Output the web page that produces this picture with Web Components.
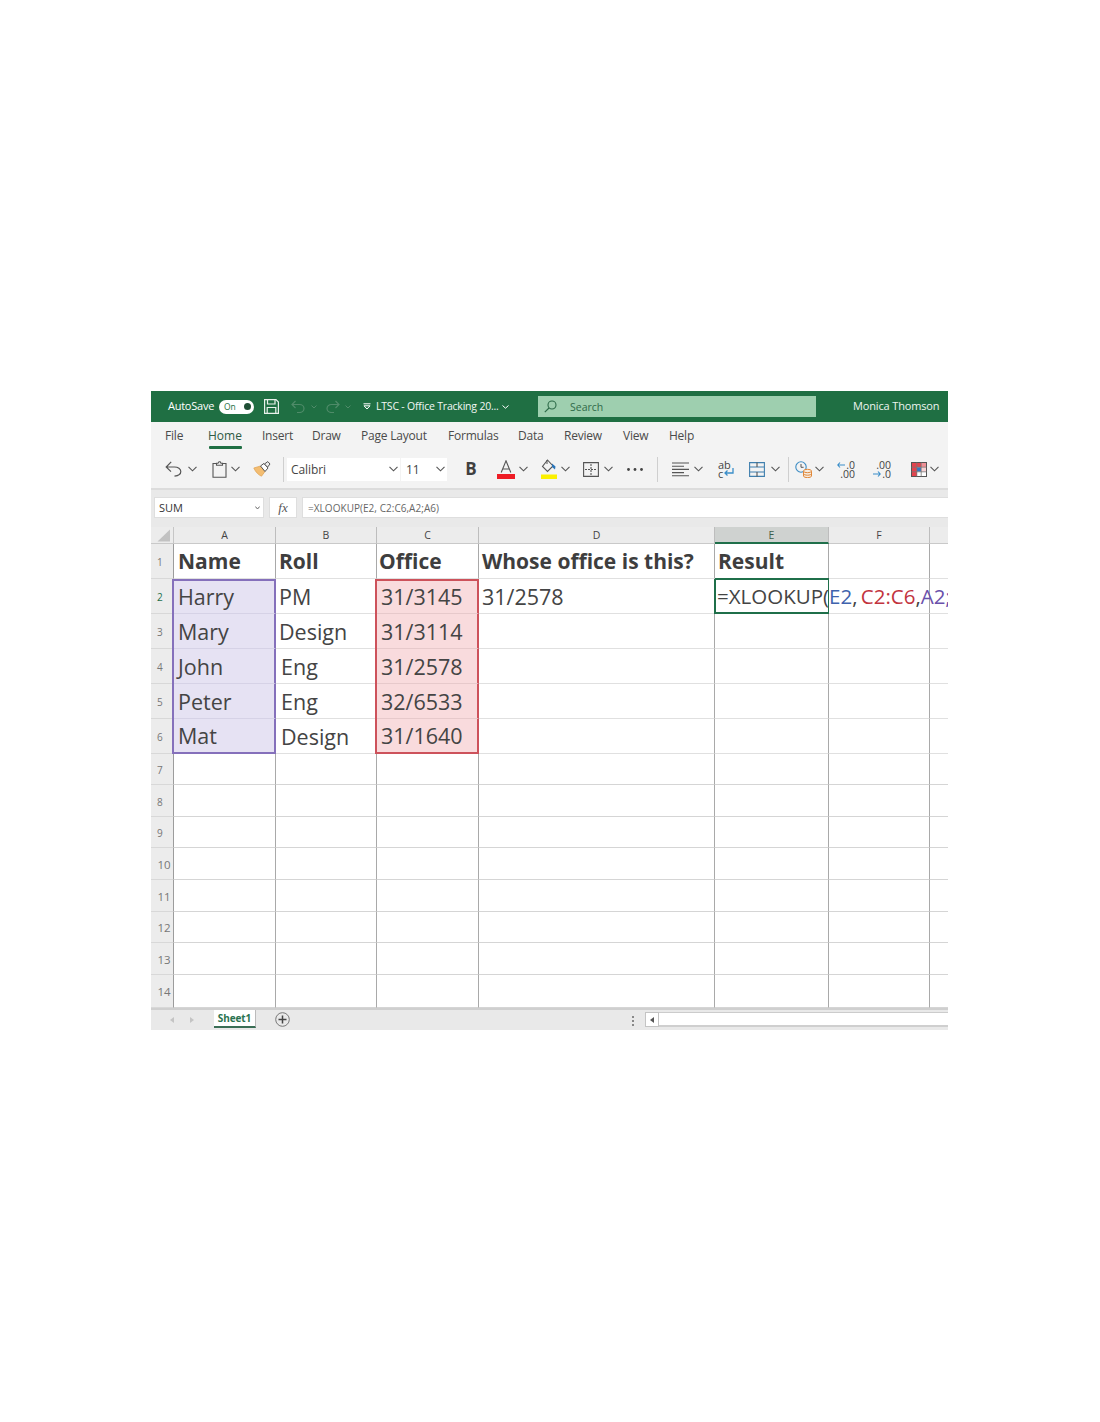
<!DOCTYPE html>
<html lang="en"><head><meta charset="utf-8"><title>Excel XLOOKUP</title>
<style>
html,body{margin:0;background:#fff;font-family:"Open Sans","Noto Sans",sans-serif;}
body{height:1422px;overflow:hidden;display:flow-root}
</style></head><body>
<x-app>
  <x-titlebar></x-titlebar>
  <x-menubar></x-menubar>
  <x-toolbar></x-toolbar>
  <x-formulabar></x-formulabar>
  <x-sheet></x-sheet>
  <x-sheetbar></x-sheetbar>
</x-app>
<script>
const chev=(c='#555')=>`<svg width="9" height="6" viewBox="0 0 9 6" fill="none" stroke="${c}" stroke-width="1.1"><path d="M.5 .8 4.5 4.8 8.5 .8"/></svg>`;
function def(name,css,html,init){
  customElements.define(name,class extends HTMLElement{
    constructor(){super();const s=this.attachShadow({mode:'open'});s.innerHTML=`<style>${css}</style>${typeof html==='function'?html(this):html}`;}
    connectedCallback(){if(init&&!this._i){this._i=1;init(this)}}
  });
}
def('x-app',`:host{display:block;width:797px;height:639px;margin:391px 0 0 151px;overflow:hidden;color:#444;font-family:"Open Sans","Noto Sans",sans-serif}`,`<slot></slot>`);

def('x-titlebar',`
:host{display:flex;align-items:center;height:31px;background:#1f6f43;color:#fff;font-size:11px;position:relative}
span{white-space:nowrap;display:block;padding-bottom:2px}
svg{display:block;flex:none}
.auto{margin-left:17px;width:51px;letter-spacing:-.25px}
.toggle{width:35px;height:14px;border-radius:7px;background:#fff;color:#1f6f43;font-size:8.5px;line-height:13px;position:relative;text-indent:5px;box-sizing:border-box}
.toggle i{position:absolute;right:3px;top:3.5px;width:7px;height:7px;border-radius:50%;background:#1f4f35}
.search{width:278px;height:21px;background:#9ecfaf;color:#2f6a49;display:flex;align-items:center;flex:none}
.search span{margin-left:13px;font-size:10.5px;padding-bottom:0}
.search svg{margin-left:6px}
.doc{font-size:10.5px;letter-spacing:-.2px;margin-left:5px;width:124px;color:#f2f7f4}
.name{margin-left:37px;font-size:11px;color:#eef5f0;letter-spacing:-.15px}
`,`
<span class="auto">AutoSave</span>
<div class="toggle">On<i></i></div>
<svg style="margin-left:10px" width="15" height="15" viewBox="0 0 15 15" fill="none" stroke="#e9f1ec" stroke-width="1.2"><path d="M.6 .6H12L14.4 3V14.4H.6Z"/><path d="M3.5 .8V5H11V.8M3.2 14V8.5H11.8V14"/></svg>
<svg style="margin-left:12px" width="14" height="13" viewBox="0 0 14 13" fill="none" stroke="#4f8b69" stroke-width="1.2"><path d="M4.5 1 1 4.5 4.5 8M1 4.5H8.5C11 4.5 13 6.3 13 8.5S11 12.5 8.5 12.5H6"/></svg>
<svg style="margin-left:6px" width="6" height="4" viewBox="0 0 6 4" fill="none" stroke="#4f8b69"><path d="M.5 .5 3 3 5.5 .5"/></svg>
<svg style="margin-left:9px" width="14" height="13" viewBox="0 0 14 13" fill="none" stroke="#4f8b69" stroke-width="1.2"><path d="M9.5 1 13 4.5 9.5 8M13 4.5H5.5C3 4.5 1 6.3 1 8.5S3 12.5 5.5 12.5H8"/></svg>
<svg style="margin-left:5px" width="6" height="4" viewBox="0 0 6 4" fill="none" stroke="#4f8b69"><path d="M.5 .5 3 3 5.5 .5"/></svg>
<svg style="margin-left:12px" width="8" height="7" viewBox="0 0 8 7" fill="none" stroke="#fff"><path d="M.5 .8H7.5M1 2.8H7L4 6Z"/></svg>
<span class="doc">LTSC - Office Tracking 20...</span>
<svg style="margin-left:2px" width="7" height="4" viewBox="0 0 7 4" fill="none" stroke="#fff"><path d="M.5 .5 3.5 3.2 6.5 .5"/></svg>
<div class="search" style="margin-left:29px"><svg width="13" height="13" viewBox="0 0 13 13" fill="none" stroke="#2c6a48" stroke-width="1.1"><circle cx="8" cy="5" r="4"/><path d="M5 8 .8 12.2"/></svg><span>Search</span></div>
<span class="name">Monica Thomson</span>
`);

def('x-menubar',`
:host{display:flex;align-items:center;height:30px;background:#f3f3f3;font-size:12px;color:#4a4a4a;padding:0 0 3px 14px;box-sizing:border-box;letter-spacing:-.2px}
span{display:block;white-space:nowrap;position:relative;flex:none}
.on{color:#2e5a44;letter-spacing:0;margin-right:20px}
.on::after{content:"";position:absolute;left:1px;right:0;bottom:-5px;height:3px;background:#1f6f43;border-radius:1px}
`,()=>[['File',43],['Home',0],['Insert',50],['Draw',49],['Page Layout',87],['Formulas',70],['Data',46],['Review',59],['View',46],['Help',40]]
  .map(([t,w])=>t==='Home'?`<span class="on">${t}</span>`:`<span style="width:${w}px">${t}</span>`).join(''));

const I={
undo:`<svg width="17" height="16" viewBox="0 0 17 16" fill="none" stroke="#555" stroke-width="1.2"><path d="M6.2 .8 1.2 6 6 10.6M1.4 6H9.5C13 6 15.8 8 15.8 10.5 15.8 13 13 14.8 9.5 15.2"/></svg>`,
clip:`<svg width="15" height="17" viewBox="0 0 15 17" fill="none" stroke="#555" stroke-width="1.1"><path d="M4.5 2.5H1V16.2H14V2.5H10.5"/><path d="M4.5 4.2V2.2H6L7 .8 8.2 .8 9 2.2H10.5V4.2Z"/></svg>`,
brush:`<svg width="18" height="16" viewBox="0 0 18 16"><path d="M.8 7 7.5 5 12 10.5 8.5 15.2C5.5 14 2.5 11 .8 7Z" fill="#f3bd72" stroke="#e0a050" stroke-width=".7"/><path d="M7.5 5 11 2.4 15 7 12 10.5Z" fill="#fff" stroke="#555" stroke-width="1"/><path d="M11.5 3 14.8 .6 17 3 14.5 6.2Z" fill="#eee" stroke="#555" stroke-width="1"/></svg>`,
fontA:`<svg width="18" height="19" viewBox="0 0 18 19" fill="none"><path d="M4.2 12.5 9 .8 13.8 12.5M5.6 9H12.4" stroke="#555" stroke-width="1.1"/><rect y="14" width="18" height="5" fill="#ee1c25"/></svg>`,
fill:`<svg width="16" height="20" viewBox="0 0 16 20" fill="none"><path d="M6.5 1 12 7 6.5 12.5 1.5 7.5Z" stroke="#555" stroke-width="1.1"/><path d="M6 1V5" stroke="#555"/><path d="M11 4.5 14.5 7.5 14 10.5 11 8Z" fill="#2a74b8"/><rect y="15.5" width="16" height="4.5" fill="#fbf000"/></svg>`,
borders:`<svg width="16" height="15" viewBox="0 0 16 15" fill="none" stroke="#555" stroke-width="1.1"><path d="M.6 .6H15.4V14.4H.6Z"/><path d="M8 2V13M2 7.5H14" stroke-dasharray="2 1"/></svg>`,
dots:`<svg width="16" height="3" viewBox="0 0 16 3" fill="#444"><circle cx="1.5" cy="1.5" r="1.4"/><circle cx="8" cy="1.5" r="1.4"/><circle cx="14.5" cy="1.5" r="1.4"/></svg>`,
align:`<svg width="17" height="15" viewBox="0 0 17 15" fill="none" stroke="#555" stroke-width="1.1"><path d="M0 1H17M0 4.2H12M0 7.4H17M0 10.6H12M0 13.8H17"/></svg>`,
merge:`<svg width="16" height="15" viewBox="0 0 16 15" fill="none" stroke-width="1.1"><path d="M.6 .6H15.4V14.4H.6ZM.6 5H15.4M.6 10H15.4" stroke="#3f7fae"/><path d="M8 .6V5M8 10V14.4" stroke="#555"/></svg>`,
cond:`<svg width="17" height="17" viewBox="0 0 17 17" fill="none"><circle cx="6" cy="6" r="5.2" stroke="#3c8cc4" stroke-width="1.1"/><path d="M6 3V6.3H8.6" stroke="#555"/><path d="M8.5 10V15C8.5 16 10.5 16.6 12.5 16.6S16.5 16 16.5 15V10" fill="#f7ece0" stroke="#e0883a"/><ellipse cx="12.5" cy="10" rx="4" ry="1.7" fill="#f7ece0" stroke="#e0883a"/><path d="M8.5 12.6C8.5 13.6 10.5 14.2 12.5 14.2S16.5 13.6 16.5 12.6" stroke="#e0883a"/></svg>`,
table:`<svg width="16" height="15" viewBox="0 0 16 15"><rect x=".5" y=".5" width="15" height="14" fill="#fff" stroke="#555"/><rect x="1" y="1" width="5" height="13" fill="#e4434d"/><rect x="6" y="1" width="4" height="4.3" fill="#e4434d"/><rect x="6" y="5.3" width="4" height="4.3" fill="#3479c4"/><rect x="10" y="1" width="5" height="4.3" fill="#ee9096"/><rect x="10" y="5.3" width="5" height="4.3" fill="#f7d0d2"/><path d="M5.8 .5V14.5M10.2 .5V14.5M.5 5.2H15.5M.5 9.8H15.5" stroke="#777" stroke-width=".8"/></svg>`,
left:`<svg width="8" height="6" viewBox="0 0 8 6" fill="none" stroke="#3a8ec9" stroke-width="1.1"><path d="M3 .5.8 3 3 5.5M1 3H8"/></svg>`,
right:`<svg width="8" height="6" viewBox="0 0 8 6" fill="none" stroke="#3a8ec9" stroke-width="1.1"><path d="M5 .5 7.2 3 5 5.5M7 3H0"/></svg>`
};
def('x-toolbar',`
:host{display:flex;align-items:center;height:36px;background:#f3f3f3;padding:0 0 2px 14px;box-sizing:border-box;position:relative}
svg{display:block;flex:none}
.g{flex:none}
.sep{width:1px;height:25px;background:#cfcfcf;flex:none}
.box{height:23px;background:#fff;font-size:12px;color:#444;display:flex;align-items:center;box-sizing:border-box;flex:none;letter-spacing:-.1px}
.b{font:bold 17px "Open Sans",sans-serif;color:#404040;width:12px;text-align:center;flex:none;line-height:20px}
.wrap{width:17px;flex:none;height:18px;position:relative;font-size:11px;line-height:9px;color:#444}
.wrap div{height:9px}
.wrap svg{position:absolute;left:5px;top:8px}
.dec{flex:none;font-size:10.5px;line-height:8px;color:#444;width:18px;display:flex;flex-direction:column;gap:1px}
.dec div{height:8px;white-space:nowrap;display:flex;justify-content:flex-end;align-items:center;gap:1px}
`,`
${I.undo}<span class="g" style="width:6px"></span>${chev()}
<span class="g" style="width:15px"></span>${I.clip}<span class="g" style="width:4px"></span>${chev()}
<span class="g" style="width:13px"></span>${I.brush}
<span class="sep" style="margin-left:12px"></span>
<div class="box" style="margin-left:3px;width:113px;padding-left:4px;justify-content:space-between;padding-right:2px"><span>Calibri</span>${chev()}</div>
<div class="box" style="margin-left:1px;width:46px;padding-left:5px;justify-content:space-between;padding-right:2px"><span>11</span>${chev()}</div>
<span class="b" style="margin-left:18px">B</span>
<span class="g" style="width:20px"></span>${I.fontA}<span class="g" style="width:4px"></span>${chev()}
<span class="g" style="width:13px"></span>${I.fill}<span class="g" style="width:4px"></span>${chev()}
<span class="g" style="width:13px"></span>${I.borders}<span class="g" style="width:5px"></span>${chev()}
<span class="g" style="width:14px"></span>${I.dots}
<span class="sep" style="margin-left:14px"></span>
<span class="g" style="width:14px"></span>${I.align}<span class="g" style="width:5px"></span>${chev()}
<span class="g" style="width:15px"></span>
<div class="wrap"><div>ab</div><div>c</div><svg width="11" height="9" viewBox="0 0 11 9" fill="none" stroke="#3a8ec9" stroke-width="1.3"><path d="M10 0V5H2M4.5 2.5 2 5 4.5 7.5"/></svg></div>
<span class="g" style="width:14px"></span>${I.merge}<span class="g" style="width:6px"></span>${chev()}
<span class="sep" style="margin-left:8px"></span>
<span class="g" style="width:6px"></span>${I.cond}<span class="g" style="width:3px"></span>${chev()}
<span class="g" style="width:13px"></span>
<div class="dec"><div>${I.left}<span>.0</span></div><div>.00</div></div>
<span class="g" style="width:18px"></span>
<div class="dec"><div>.00</div><div>${I.right}<span>.0</span></div></div>
<span class="g" style="width:20px"></span>${I.table}<span class="g" style="width:3px"></span>${chev()}
`);

def('x-formulabar',`
:host{display:block;background:#e9e9e9;height:39px;box-sizing:border-box;border-top:2px solid #dcdcdc;padding-top:7px}
.row{display:flex;height:21px;align-items:stretch}
.box{background:#fff;box-sizing:border-box;display:flex;align-items:center;flex:none;border:1px solid #dedede}
.name{margin-left:3px;width:110px;font-size:11px;padding:0 3px 0 4px;justify-content:space-between;color:#333}
.fx{margin-left:5px;width:28px;justify-content:center;font:italic 13px "Liberation Serif",serif;color:#555}
.f{margin-left:5px;flex:1;font-size:10px;padding-left:5px;color:#666;letter-spacing:.04px;border-right:0}
`,`<div class="row"><div class="box name"><span>SUM</span><svg width="5" height="4" viewBox="0 0 5 4" fill="none" stroke="#666"><path d="M.3 .5 2.5 3 4.7 .5"/></svg></div><div class="box fx">fx</div><div class="box f">=XLOOKUP(E2, C2:C6,A2;A6)</div></div>`);

def('x-cell',`
:host{display:flex;align-items:center;box-sizing:border-box;background:#fff;border-right:1px solid #a9a9a9;border-bottom:1px solid #e0e0e0;font-size:21.5px;color:#444;white-space:nowrap;position:relative;min-width:0;padding-left:var(--pad,3px)}
:host([bold]){font-weight:700;font-size:21px;color:#3e3e3e}
:host([plain]){border-bottom-color:#d5d5d5}
:host([nob]){border-right:0}
:host([range=purple]){background:#e6e2f3;border-right:2px solid #8570bb;box-shadow:-2px 0 0 #8570bb;border-bottom-color:#d6d2e6}
:host([range=red]){background:#f9dbdd;border-right:2px solid #cd525b;box-shadow:-2px 0 0 #cd525b;border-bottom-color:#e7c9cb}
:host([range=purple][first]){box-shadow:-2px 0 0 #8570bb,inset 0 2px 0 #8570bb}
:host([range=red][first]){box-shadow:-2px 0 0 #cd525b,inset 0 2px 0 #cd525b}
:host([range=purple][last]){border-bottom:2px solid #8570bb}
:host([range=red][last]){border-bottom:2px solid #cd525b}
:host([active]){z-index:2;background:transparent;font-size:20.5px;word-spacing:-2px;box-shadow:inset 1px 1px 0 #1f6f4a,-1px 0 0 #1f6f4a,0 -1px 0 #1f6f4a;border-right:1px solid #1f6f4a;border-bottom:2px solid #1f6f4a}
`,`<slot></slot>`);

def('x-head',`
:host{display:flex;align-items:center;justify-content:center;box-sizing:border-box;background:#ececec;font-size:10.5px;color:#555}
:host([col]){border-right:1px solid #bdbdbd;border-bottom:1px solid #c9c9c9;color:#444}
:host([nob]){border-right:0}
:host([sel]){background:#cfd2d0;border-bottom:2px solid #1f6f4a;color:#3c5e4c}
:host([row]){border-right:1px solid #9c9c9c;border-bottom:1px solid #d8d8d8;color:#777;justify-content:flex-start;padding:2px 0 0 6px;font-size:10px}
:host([wide]){font-size:11.5px;padding:1px 0 0 6.5px}
:host([active]){color:#1f6f4a;border-right:2px solid #47525a}
`,`<slot></slot>`);

def('x-sheet',`
:host{display:grid;grid-template-columns:23px 102px 101px 102px 236px 114px 101px 18px;grid-template-rows:17px 35px 35px 35px 35px 35px 35px 31px 32px 31px 32px 32px 31px 32px 33px;height:481px;background:#fff;overflow:hidden}
.corner{background:#ececec;border-right:1px solid #c6c6c6;box-sizing:border-box;border-bottom:1px solid #c9c9c9;display:flex;justify-content:center;align-items:center}
`,`<div class="corner"><svg width="14" height="13" viewBox="0 0 14 13" style="margin-left:4px"><path d="M13 .5V12.5H.5Z" fill="#c2c2c2"/></svg></div><slot></slot>`,el=>{
  const cols=['A','B','C','D','E','F',''];
  const data={1:[['Name',4],['Roll',3],['Office',2],['Whose office is this?',3],['Result',3]],
   2:[['Harry',4],['PM',3],['31/3145',4],['31/2578',3]],
   3:[['Mary',4],['Design',3],['31/3114',4]],
   4:[['John',4],['Eng',5],['31/2578',4]],
   5:[['Peter',4],['Eng',5],['32/6533',4]],
   6:[['Mat',4],['Design',5],['31/1640',4]]};
  let h='';
  cols.forEach((c,i)=>h+=`<x-head col ${i===4?'sel':''} ${i===6?'nob':''}>${c}</x-head>`);
  for(let r=1;r<=14;r++){
    h+=`<x-head row ${r===2?'active':''} ${r>=10?'wide':''}>${r}</x-head>`;
    for(let c=0;c<7;c++){
      const d=(data[r]||[])[c];
      let a='';
      if(r===1)a+=' bold';
      if(r>=7)a+=' plain';
      if(c===6)a+=' nob';
      if(r>=2&&r<=6&&(c===0||c===2)){a+=` range="${c===0?'purple':'red'}"`;if(r===2)a+=' first';if(r===6)a+=' last';}
      let t=d?d[0]:'';
      let pad=d?d[1]:3;
      if(r===2&&c===4){a+=' active';pad=2;t=`<span>=XLOOKUP(<span style="color:#3f63ad">E2</span>, <span style="color:#c2333e">C2:C6</span>,<span style="color:#6a50ab">A2;</span></span>`;}
      h+=`<x-cell${a} style="--pad:${pad}px">${t}</x-cell>`;
    }
  }
  el.innerHTML=h;
});

def('x-sheetbar',`
:host{display:flex;align-items:flex-start;height:22px;box-sizing:border-box;background:#e9e9e9;border-top:2px solid #cfcfcf;position:relative}
svg{display:block;flex:none}
.tab{margin-left:20px;width:42px;height:18px;background:#fff;color:#2a7350;font-size:10px;font-weight:700;display:flex;align-items:center;justify-content:center;border-bottom:2px solid #3a6e55;border-right:1px solid #bbb;box-sizing:border-box;flex:none;letter-spacing:-.1px}
.btn{width:14px;height:15px;background:#fff;border:1px solid #c4c4c4;box-sizing:border-box;display:flex;align-items:center;justify-content:center;flex:none;margin-top:2px}
.track{flex:1;height:15px;background:#fff;border-bottom:2px solid #cfcfcf;border-top:1px solid #ccc;box-sizing:border-box;margin-top:2px}
`,`
<svg style="margin:7px 0 0 19px" width="4" height="6" viewBox="0 0 4 6" fill="#c4c4c4"><path d="M4 0V6L0 3Z"/></svg>
<svg style="margin:7px 0 0 16px" width="4" height="6" viewBox="0 0 4 6" fill="#c4c4c4"><path d="M0 0V6L4 3Z"/></svg>
<div class="tab">Sheet1</div>
<svg style="margin:2px 0 0 19px" width="15" height="15" viewBox="0 0 15 15" fill="none"><circle cx="7.5" cy="7.5" r="6.8" stroke="#777"/><path d="M7.5 3.5V11.5M3.5 7.5H11.5" stroke="#444" stroke-width="1.5"/></svg>
<svg style="margin:6px 0 0 342px" width="2" height="10" viewBox="0 0 2 10" fill="#888"><rect width="2" height="2"/><rect y="4" width="2" height="2"/><rect y="8" width="2" height="2"/></svg>
<div class="btn" style="margin-left:11px"><svg width="4" height="6" viewBox="0 0 4 6" fill="#555"><path d="M4 0V6L0 3Z"/></svg></div>
<div class="track"></div>
`);
</script>
</body></html>
